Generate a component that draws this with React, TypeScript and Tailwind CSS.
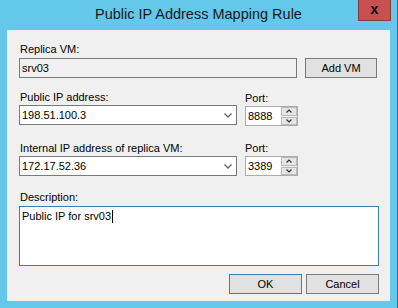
import React from 'react';

const font = { fontFamily: '"Liberation Sans", Arial, sans-serif' };

function Chevron() {
  return (
    <svg width="8" height="5" viewBox="0 0 8 5" className="shrink-0">
      <polyline points="0.5,0.5 4,4 7.5,0.5" fill="none" stroke="#606060" strokeWidth="1.3" />
    </svg>
  );
}

function Combo({ value }: { value: string }) {
  return (
    <div className="flex h-[20px] w-[218px] items-center border border-[#7a7a7a] bg-white pl-[2px] pr-[4px]">
      <span className="flex-1 leading-[13px]">{value}</span>
      <Chevron />
    </div>
  );
}

function Spin({ value }: { value: string }) {
  return (
    <div className="flex h-[20px] w-[53px] border border-[#acacac] bg-white">
      <span className="flex flex-1 items-center pl-[2px] leading-[13px]">{value}</span>
      <div className="flex w-[16px] flex-col gap-[1px] bg-[#f0f0f0] p-[0px]">
        <div className="flex flex-1 items-center justify-center border border-[#b9b9b9] bg-[#e5e5e5]">
          <svg width="6" height="4" viewBox="0 0 6 4">
            <polyline points="0.5,3.5 3,1 5.5,3.5" fill="none" stroke="#333" strokeWidth="1.2" />
          </svg>
        </div>
        <div className="flex flex-1 items-center justify-center border border-[#b9b9b9] bg-[#e5e5e5]">
          <svg width="6" height="4" viewBox="0 0 6 4">
            <polyline points="0.5,0.5 3,3 5.5,0.5" fill="none" stroke="#333" strokeWidth="1.2" />
          </svg>
        </div>
      </div>
    </div>
  );
}

export default function App() {
  return (
    <div className="relative h-[308px] w-[398px] border-r border-[#3a6e82] bg-[#63c8ea] text-[11px] text-black" style={font}>
      <div className="flex h-[30px] items-center justify-center pb-[1px]">
        <span className="text-[14.5px] leading-none text-[#1a1a1a]">Public IP Address Mapping Rule</span>
      </div>
      <button className="absolute right-[6px] top-0 flex h-[21px] w-[33px] items-center justify-center border border-t-0 border-[#8a3a3a] bg-[#c75050] pb-[2px] text-[14px] font-bold leading-none text-black">
        x
      </button>

      <div className="ml-[7px] flex h-[271px] w-[383px] flex-col bg-[#f0f0f0] pl-[12px]">
        <div className="ml-[1px] mt-[13px] leading-[13px]">Replica VM:</div>
        <div className="mt-[2px] flex gap-[8px]">
          <div className="flex h-[20px] w-[278px] items-center border border-[#7a7a7a] bg-[#f0f0f0] pl-[2px] leading-[13px]">srv03</div>
          <button className="h-[20px] w-[72px] border border-[#7a7a7a] bg-[#e1e1e1] leading-[13px]">Add VM</button>
        </div>

        <div className="mt-[13px] flex gap-[8px]">
          <div className="flex flex-col">
            <div className="ml-[1px] leading-[13px]">Public IP address:</div>
            <div className="mt-[1px]">
              <Combo value="198.51.100.3" />
            </div>
          </div>
          <div className="mt-[1px] flex flex-col">
            <div className="leading-[13px]">Port:</div>
            <div className="mt-[1px]">
              <Spin value="8888" />
            </div>
          </div>
        </div>

        <div className="mt-[16px] flex gap-[8px]">
          <div className="flex flex-col">
            <div className="ml-[1px] leading-[13px]">Internal IP address of replica VM:</div>
            <div className="mt-[1px]">
              <Combo value="172.17.52.36" />
            </div>
          </div>
          <div className="flex flex-col">
            <div className="leading-[13px]">Port:</div>
            <div className="mt-[1px]">
              <Spin value="3389" />
            </div>
          </div>
        </div>

        <div className="ml-[1px] mt-[15px] leading-[13px]">Description:</div>
        <div className="mt-[2px] h-[60px] w-[360px] border border-[#3c7fb1] bg-white px-[2px] pt-[3px] leading-[13px]">
          Public IP for srv03<span className="ml-[1px] inline-block h-[13px] w-[1px] bg-black align-top" />
        </div>

        <div className="mt-[8px] flex w-[360px] justify-end gap-[4px]">
          <button className="h-[20px] w-[73px] border border-[#3c7fb1] bg-[#e1e1e1] leading-[13px]">OK</button>
          <button className="h-[20px] w-[73px] border border-[#7a7a7a] bg-[#e1e1e1] leading-[13px]">Cancel</button>
        </div>
      </div>
    </div>
  );
}
